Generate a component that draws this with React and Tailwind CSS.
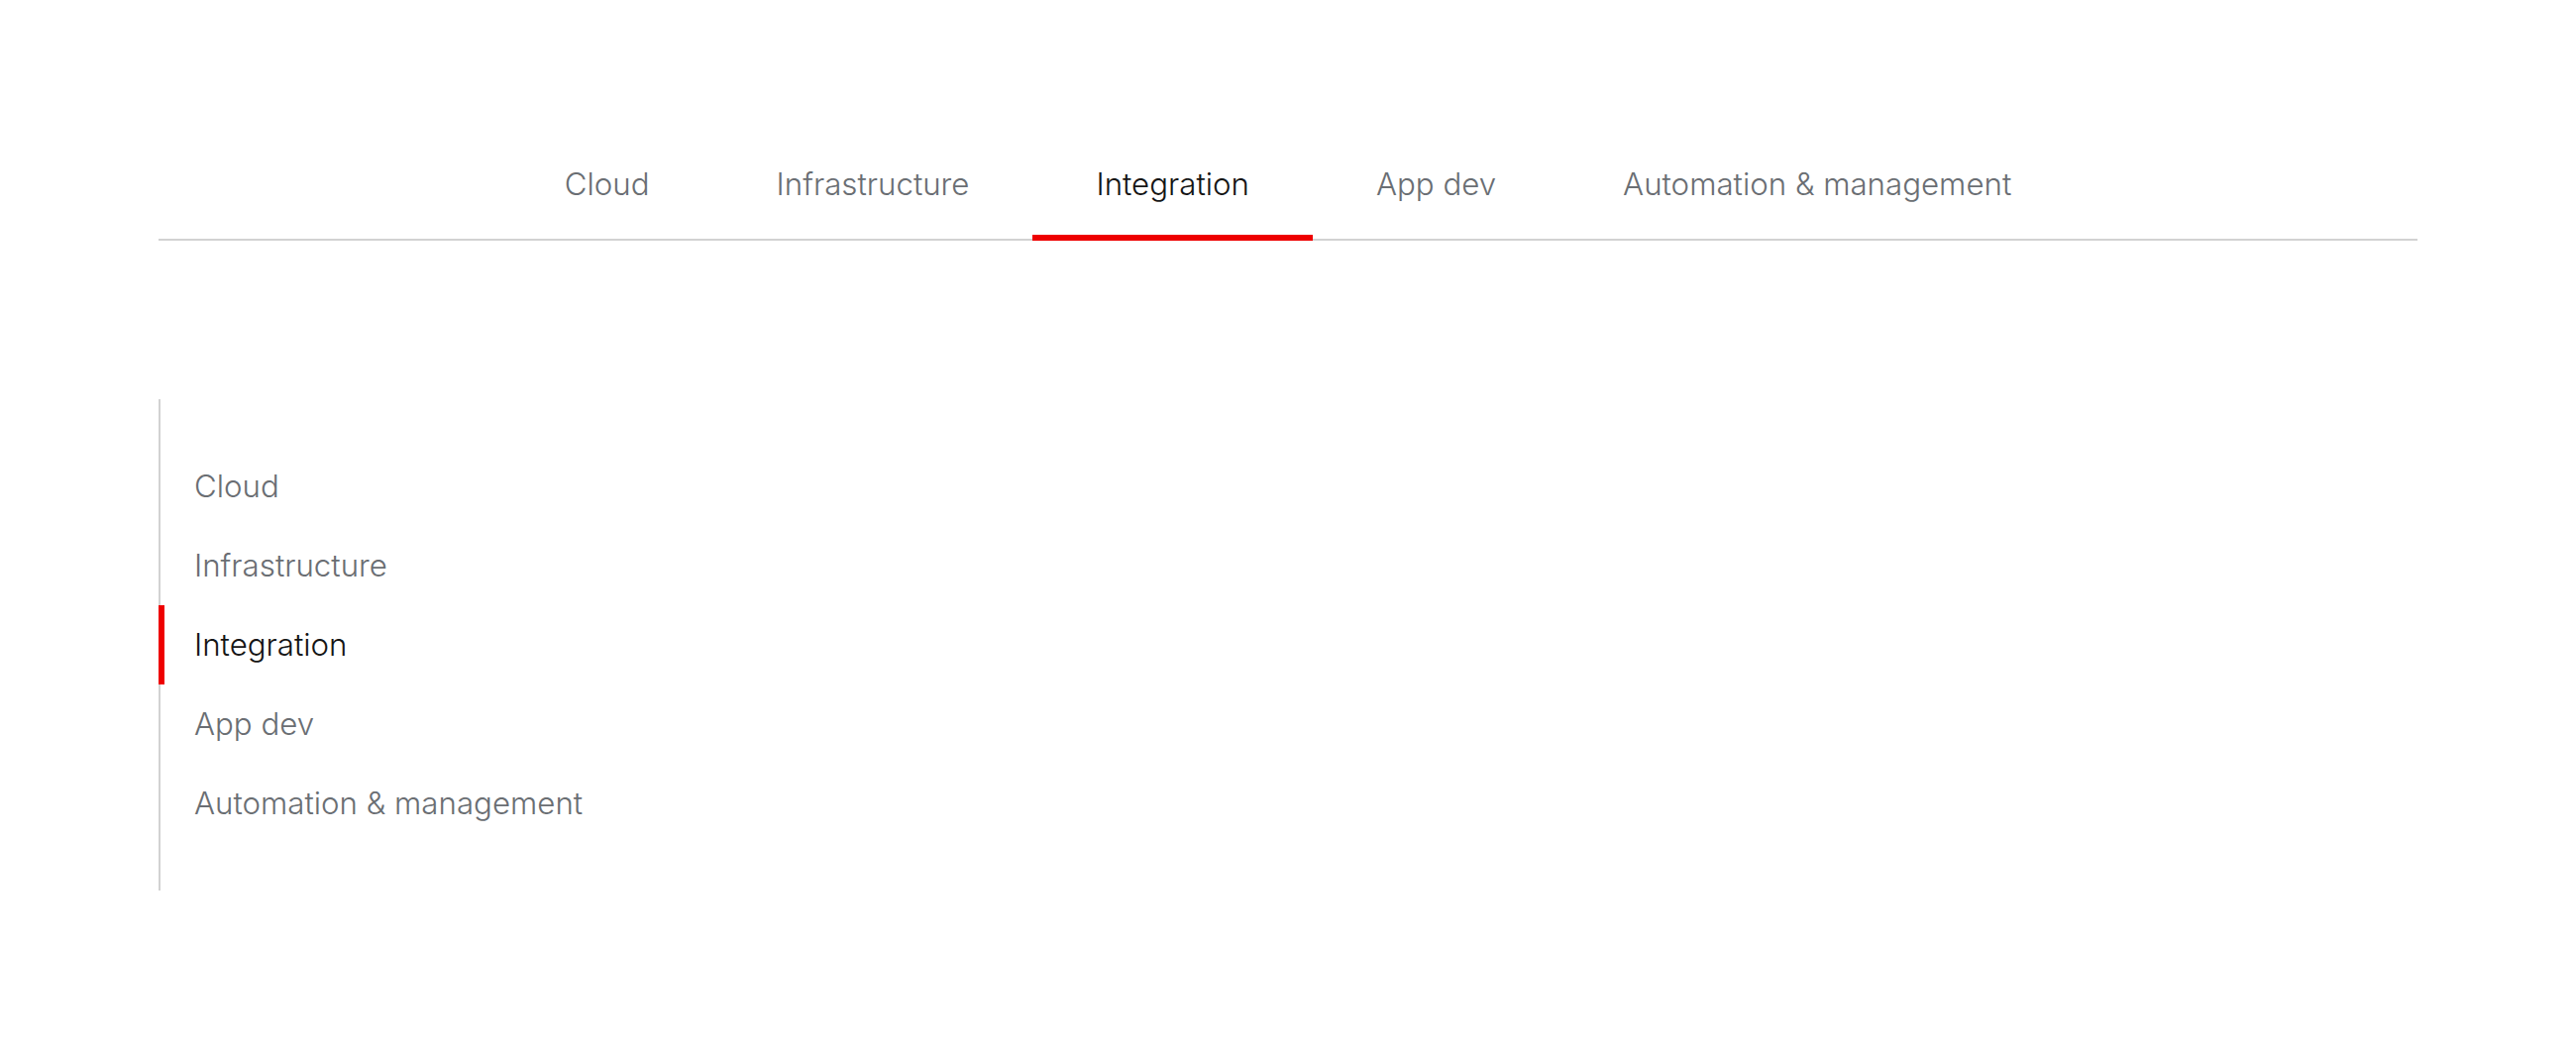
const tabs = ["Cloud", "Infrastructure", "Integration", "App dev", "Automation & management"]

export default function App() {
  const active = "Integration"
  return (
    <div className="min-h-screen bg-white px-[160px] pt-[152px] font-['Inter',sans-serif] text-[31.25px] font-light">
      <nav className="flex justify-center border-b-2 border-[#d2d2d2]">
        {tabs.map((t) => (
          <button
            key={t}
            className={
              t === active
                ? "relative -mb-[2px] border-b-[6px] border-[#ee0000] px-16 pb-[33px] pt-[16px] leading-[36px] text-[#151515]"
                : "relative -mb-[2px] border-b-[6px] border-transparent px-16 pb-[33px] pt-[16px] leading-[36px] text-[#6a6e73]"
            }
          >
            {t}
          </button>
        ))}
      </nav>

      <aside className="mt-[160px] flex w-fit flex-col border-l-2 border-[#d2d2d2] py-[48px]">
        {tabs.map((t) => (
          <a
            key={t}
            className={
              t === active
                ? "-ml-[2px] flex h-[80px] items-center border-l-[6px] border-[#ee0000] pl-[30px] pr-8 text-[#151515]"
                : "-ml-[2px] flex h-[80px] items-center border-l-[6px] border-transparent pl-[30px] pr-8 text-[#6a6e73]"
            }
          >
            {t}
          </a>
        ))}
      </aside>
    </div>
  )
}
